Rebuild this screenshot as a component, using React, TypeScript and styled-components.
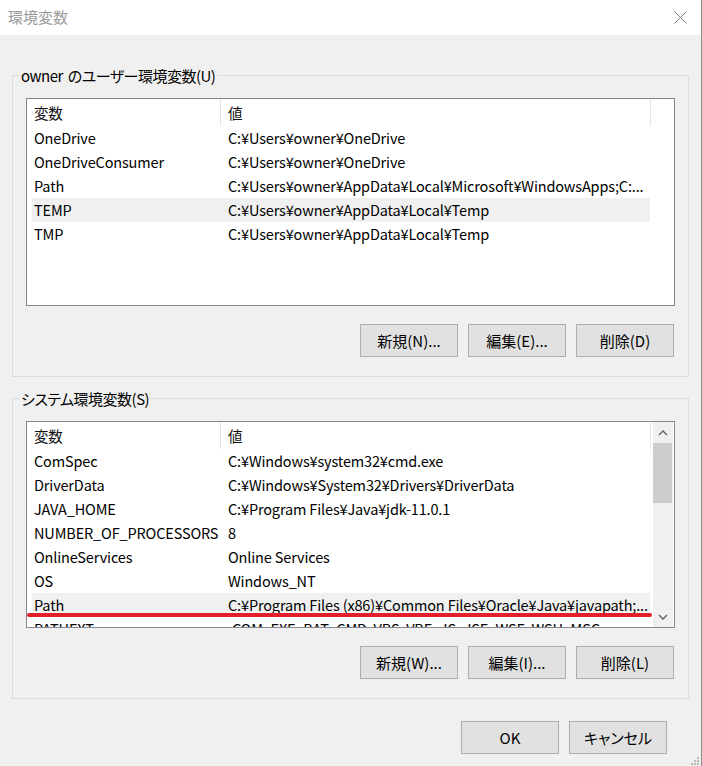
import React from "react";
import styled, { createGlobalStyle } from "styled-components";

const GlobalStyle = createGlobalStyle`
  html, body {
    margin: 0;
    padding: 0;
    background: #f0f0f0;
  }
  body {
    font-family: "Noto Sans CJK JP", "Noto Sans", sans-serif;
    font-size: 15px;
    font-feature-settings: "palt";
    color: #000;
  }
  * { box-sizing: border-box; }
`;

const Window = styled.div`
  position: relative;
  width: 702px;
  height: 766px;
  display: flex;
  flex-direction: column;
  background: #f0f0f0;
  border-right: 1px solid #8c8c8c;
  overflow: hidden;
`;

const TitleBar = styled.div`
  height: 35px;
  flex: none;
  background: #ffffff;
  display: flex;
  align-items: center;
  justify-content: space-between;
  padding: 0 14px 0 8px;
`;

const TitleText = styled.span`
  font-size: 15px;
  line-height: 20px;
  color: #9a9a9a;
  margin-top: -1px;
`;

const CloseIcon = styled.svg`
  width: 13px;
  height: 13px;
  display: block;
  margin-top: -1px;
`;

const Content = styled.div`
  flex: 1;
  display: flex;
  flex-direction: column;
  padding: 40px 12px 0 12px;
`;

const GroupBox = styled.section<{ $gap?: number }>`
  position: relative;
  border: 1px solid #dcdcdc;
  padding: 22px 13px 19px 13px;
  margin-top: ${(p) => p.$gap ?? 0}px;
  display: flex;
  flex-direction: column;
`;

const GroupLabel = styled.span`
  position: absolute;
  top: -10px;
  left: 6px;
  padding: 0 2px;
  line-height: 20px;
  background: #f0f0f0;
  font-size: 15px;
  letter-spacing: -0.5px;
  word-spacing: 2px;
  white-space: nowrap;
`;

const ListView = styled.div<{ $h: number }>`
  position: relative;
  height: ${(p) => p.$h}px;
  border: 1px solid #828790;
  background: #ffffff;
  display: flex;
  overflow: hidden;
`;

const ListBody = styled.div`
  flex: 1;
  min-width: 0;
  display: flex;
  flex-direction: column;
  overflow: hidden;
  font-size: 14.5px;
  letter-spacing: -0.15px;
`;

const HeaderRow = styled.div`
  flex: none;
  height: 27px;
  display: flex;
  padding-left: 5px;
`;

const HeaderCell = styled.div<{ $w: number; $pl: number }>`
  width: ${(p) => p.$w}px;
  flex: none;
  padding-left: ${(p) => p.$pl}px;
  border-right: 1px solid #e5e5e5;
  line-height: 27px;
  white-space: nowrap;
  overflow: hidden;
  color: #111;
`;

const Row = styled.div<{ $selected?: boolean }>`
  flex: none;
  height: 24px;
  width: 618px;
  margin-left: 5px;
  display: flex;
  background: ${(p) => (p.$selected ? "#f0f0f0" : "transparent")};
`;

const Cell = styled.div<{ $w: number; $pl: number }>`
  width: ${(p) => p.$w}px;
  flex: none;
  padding-left: ${(p) => p.$pl}px;
  line-height: 24px;
  white-space: nowrap;
  overflow: hidden;
`;

const ScrollBar = styled.div`
  flex: none;
  width: 20px;
  margin-right: 1px;
  background: #f0f0f0;
  display: flex;
  flex-direction: column;
`;

const ScrollArrow = styled.div`
  height: 21px;
  flex: none;
  display: flex;
  align-items: center;
  justify-content: center;
`;

const ScrollThumb = styled.div`
  height: 60px;
  flex: none;
  width: 19px;
  background: #cdcdcd;
`;

const ScrollTrack = styled.div`
  flex: 1;
`;

const Marker = styled.div`
  position: absolute;
  left: 0;
  top: 191px;
  width: 625px;
  height: 4px;
  border-radius: 2px;
  background: #e3202a;
`;

const ButtonRow = styled.div<{ $mt: number; $pr: number }>`
  display: flex;
  justify-content: flex-end;
  gap: 10px;
  margin-top: ${(p) => p.$mt}px;
  padding-right: ${(p) => p.$pr}px;
`;

const Button = styled.button`
  width: 98px;
  height: 33px;
  padding: 0;
  background: #e1e1e1;
  border: 1px solid #adadad;
  border-radius: 0;
  font-family: "Noto Sans CJK JP", "Noto Sans", sans-serif;
  font-feature-settings: "palt";
  font-size: 15px;
  color: #000;
  line-height: 31px;
`;

const Grip = styled.svg`
  position: absolute;
  right: 1px;
  bottom: 0;
  width: 10px;
  height: 10px;
`;

type Item = { name: string; value: string; selected?: boolean };

const userVars: Item[] = [
  { name: "OneDrive", value: "C:¥Users¥owner¥OneDrive" },
  { name: "OneDriveConsumer", value: "C:¥Users¥owner¥OneDrive" },
  {
    name: "Path",
    value: "C:¥Users¥owner¥AppData¥Local¥Microsoft¥WindowsApps;C:...",
  },
  { name: "TEMP", value: "C:¥Users¥owner¥AppData¥Local¥Temp", selected: true },
  { name: "TMP", value: "C:¥Users¥owner¥AppData¥Local¥Temp" },
];

const sysVars: Item[] = [
  { name: "ComSpec", value: "C:¥Windows¥system32¥cmd.exe" },
  { name: "DriverData", value: "C:¥Windows¥System32¥Drivers¥DriverData" },
  { name: "JAVA_HOME", value: "C:¥Program Files¥Java¥jdk-11.0.1" },
  { name: "NUMBER_OF_PROCESSORS", value: "8" },
  { name: "OnlineServices", value: "Online Services" },
  { name: "OS", value: "Windows_NT" },
  {
    name: "Path",
    value: "C:¥Program Files (x86)¥Common Files¥Oracle¥Java¥javapath;...",
    selected: true,
  },
  {
    name: "PATHEXT",
    value: ".COM;.EXE;.BAT;.CMD;.VBS;.VBE;.JS;.JSE;.WSF;.WSH;.MSC",
  },
];

const Chevron = ({ up }: { up?: boolean }) => (
  <svg width="10" height="6" viewBox="0 0 10 6">
    <path
      d={up ? "M1 5 L5 1 L9 5" : "M1 1 L5 5 L9 1"}
      fill="none"
      stroke="#606060"
      strokeWidth="1.4"
    />
  </svg>
);

const VarList = ({
  items,
  height,
  scroll,
  marker,
}: {
  items: Item[];
  height: number;
  scroll?: boolean;
  marker?: boolean;
}) => (
  <ListView $h={height}>
    <ListBody>
      <HeaderRow>
        <HeaderCell $w={189} $pl={2}>
          変数
        </HeaderCell>
        <HeaderCell $w={430} $pl={7}>
          値
        </HeaderCell>
      </HeaderRow>
      {items.map((it) => (
        <Row key={it.name + it.value} $selected={it.selected}>
          <Cell $w={189} $pl={2}>
            {it.name}
          </Cell>
          <Cell $w={429} $pl={7}>
            {it.value}
          </Cell>
        </Row>
      ))}
    </ListBody>
    {scroll && (
      <ScrollBar>
        <ScrollArrow>
          <Chevron up />
        </ScrollArrow>
        <ScrollThumb />
        <ScrollTrack />
        <ScrollArrow>
          <Chevron />
        </ScrollArrow>
      </ScrollBar>
    )}
    {marker && <Marker />}
  </ListView>
);

export default function App() {
  return (
    <>
      <GlobalStyle />
      <Window>
        <TitleBar>
          <TitleText>環境変数</TitleText>
          <CloseIcon viewBox="0 0 13 13">
            <path d="M0.5 0.5 L12.5 12.5 M12.5 0.5 L0.5 12.5" stroke="#7a7a7a" strokeWidth="1" fill="none" />
          </CloseIcon>
        </TitleBar>
        <Content>
          <GroupBox>
            <GroupLabel>owner のユーザー環境変数(U)</GroupLabel>
            <VarList items={userVars} height={208} />
            <ButtonRow $mt={18} $pr={1}>
              <Button>新規(N)...</Button>
              <Button>編集(E)...</Button>
              <Button>削除(D)</Button>
            </ButtonRow>
          </GroupBox>
          <GroupBox $gap={21}>
            <GroupLabel>システム環境変数(S)</GroupLabel>
            <VarList items={sysVars} height={207} scroll marker />
            <ButtonRow $mt={18} $pr={1}>
              <Button>新規(W)...</Button>
              <Button>編集(I)...</Button>
              <Button>削除(L)</Button>
            </ButtonRow>
          </GroupBox>
          <ButtonRow $mt={22} $pr={22}>
            <Button>OK</Button>
            <Button>キャンセル</Button>
          </ButtonRow>
        </Content>
        <Grip viewBox="0 0 10 10">
          <rect x="7" y="1" width="2" height="2" fill="#b8b8b8" />
          <rect x="4" y="4" width="2" height="2" fill="#b8b8b8" />
          <rect x="7" y="4" width="2" height="2" fill="#b8b8b8" />
          <rect x="1" y="7" width="2" height="2" fill="#b8b8b8" />
          <rect x="4" y="7" width="2" height="2" fill="#b8b8b8" />
          <rect x="7" y="7" width="2" height="2" fill="#b8b8b8" />
        </Grip>
      </Window>
    </>
  );
}
